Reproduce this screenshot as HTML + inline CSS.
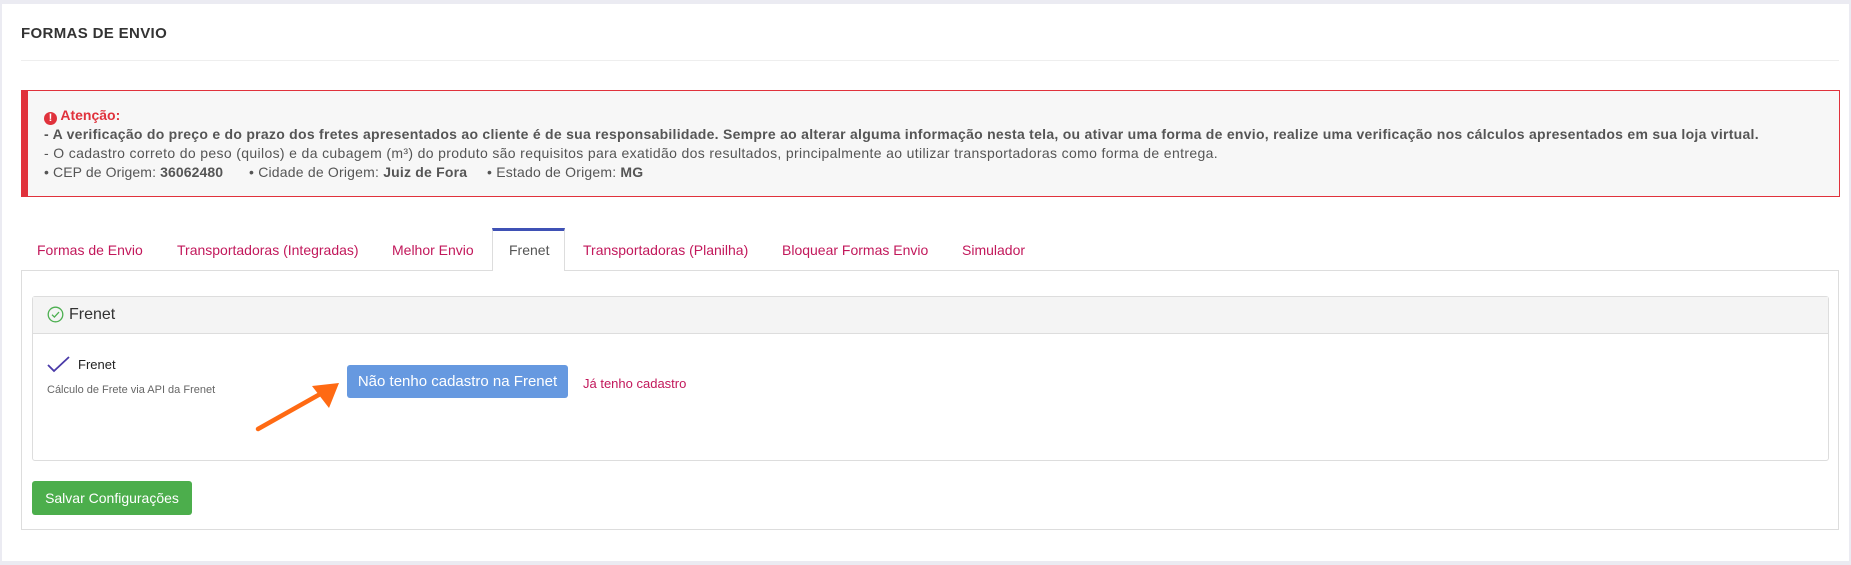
<!DOCTYPE html>
<html><head><meta charset="utf-8"><style>
*{margin:0;padding:0;box-sizing:border-box}
body{width:1851px;height:565px;background:#ebebf2;font-family:"Liberation Sans",Arial,sans-serif;position:relative;overflow:hidden}
.a{position:absolute;white-space:nowrap}
#page{left:2px;top:4px;width:1847px;height:557px;background:#fff}
.t{color:#555;font-size:14px}
.tab{top:242px;font-size:14px;color:#c2185b}
</style></head><body>
<div class="a" id="page"></div>
<div class="a" style="left:21px;top:25px;font-size:15px;font-weight:bold;color:#333;letter-spacing:0.35px">FORMAS DE ENVIO</div>
<div class="a" style="left:21px;top:60px;width:1818px;height:1px;background:#eee"></div>
<div class="a" style="left:21px;top:90px;width:1819px;height:107px;background:#f7f7f7;border:1px solid #e0323c;border-left:7px solid #e0323c"></div>
<div class="a t" style="left:44px;top:107px;color:#e0323c;font-weight:bold"><span style="display:inline-block;width:13px;height:13px;border-radius:50%;background:#e0323c;color:#fff;font-size:11px;text-align:center;line-height:13px;vertical-align:-1px">!</span> Atenção:</div>
<div class="a t" style="left:44px;top:126px;font-weight:bold;letter-spacing:0.27px">- A verificação do preço e do prazo dos fretes apresentados ao cliente é de sua responsabilidade. Sempre ao alterar alguma informação nesta tela, ou ativar uma forma de envio, realize uma verificação nos cálculos apresentados em sua loja virtual.</div>
<div class="a t" style="left:44px;top:145px;letter-spacing:0.35px">- O cadastro correto do peso (quilos) e da cubagem (m³) do produto são requisitos para exatidão dos resultados, principalmente ao utilizar transportadoras como forma de entrega.</div>
<div class="a t" style="left:44px;top:164px;letter-spacing:0.1px">• CEP de Origem: <b>36062480</b></div>
<div class="a t" style="left:249px;top:164px;letter-spacing:0.2px">• Cidade de Origem: <b>Juiz de Fora</b></div>
<div class="a t" style="left:487px;top:164px;letter-spacing:0.2px">• Estado de Origem: <b>MG</b></div>

<div class="a" style="left:21px;top:270px;width:1818px;height:260px;border:1px solid #ddd"></div>
<div class="a" style="left:492px;top:228px;width:73px;height:43px;background:#fff;border:1px solid #ddd;border-top:3px solid #3f51b5;border-bottom:none"></div>
<div class="a tab" style="left:37px">Formas de Envio</div>
<div class="a tab" style="left:177px">Transportadoras (Integradas)</div>
<div class="a tab" style="left:392px">Melhor Envio</div>
<div class="a tab" style="left:509px;color:#555">Frenet</div>
<div class="a tab" style="left:583px">Transportadoras (Planilha)</div>
<div class="a tab" style="left:782px">Bloquear Formas Envio</div>
<div class="a tab" style="left:962px">Simulador</div>

<div class="a" style="left:32px;top:296px;width:1797px;height:165px;border:1px solid #ddd;border-radius:3px"></div>
<div class="a" style="left:33px;top:297px;width:1795px;height:37px;background:#f4f4f4;border-bottom:1px solid #ddd"></div>
<svg class="a" style="left:47px;top:306px" width="17" height="17" viewBox="0 0 17 17"><circle cx="8.5" cy="8.5" r="7.3" fill="none" stroke="#4caf50" stroke-width="1.3"/><path d="M5 8.7l2.4 2.4 4.6-5" fill="none" stroke="#4caf50" stroke-width="1.3"/></svg>
<div class="a" style="left:69px;top:306px;font-size:16px;color:#333">Frenet</div>
<svg class="a" style="left:47px;top:356px" width="24" height="17" viewBox="0 0 24 17"><path d="M1 9l6 6L22 1" fill="none" stroke="#4a3aa8" stroke-width="1.8"/></svg>
<div class="a" style="left:78px;top:357px;font-size:13px;color:#222">Frenet</div>
<div class="a" style="left:47px;top:384px;font-size:11px;color:#666">Cálculo de Frete via API da Frenet</div>
<svg class="a" style="left:250px;top:375px" width="100" height="60" viewBox="0 0 100 60"><path d="M8 54L72 18" stroke="#ff6a13" stroke-width="4.5" stroke-linecap="round"/><path d="M89 8L62 11 79 33Z" fill="#ff6a13"/></svg>
<div class="a" style="left:347px;top:365px;width:221px;height:33px;background:#6699e0;border-radius:3px;color:#fff;font-size:15px;text-align:center;line-height:33px">Não tenho cadastro na Frenet</div>
<div class="a" style="left:583px;top:376px;font-size:13px;color:#c2185b">Já tenho cadastro</div>
<div class="a" style="left:32px;top:481px;width:160px;height:34px;background:#4cae4c;border-radius:3px;color:#fff;font-size:14px;text-align:center;line-height:34px">Salvar Configurações</div>
</body></html>
